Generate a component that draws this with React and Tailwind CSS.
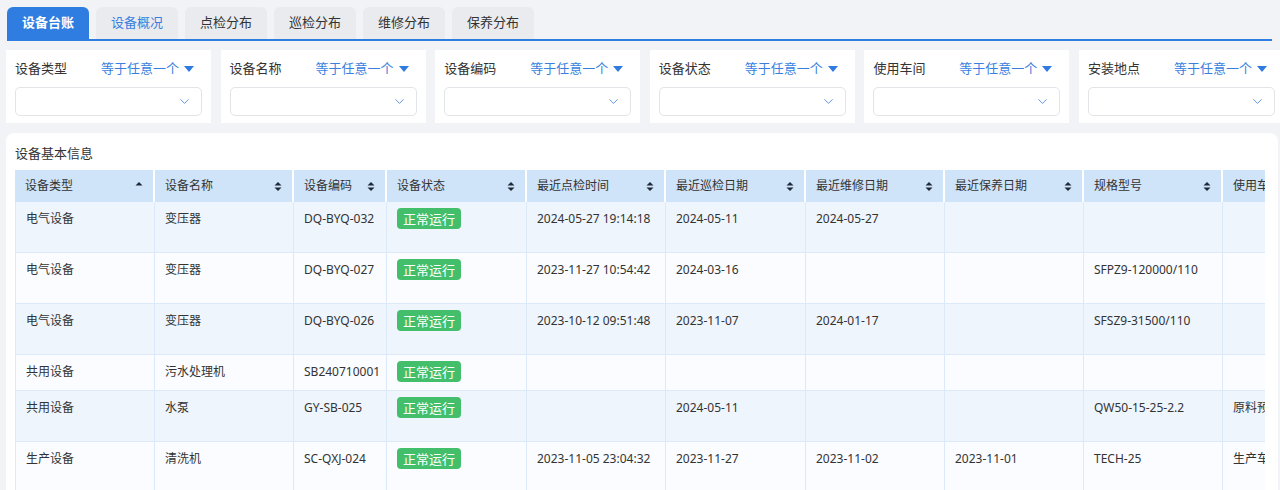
import React from "react";
import { ChevronDown } from "lucide-react";

const tabs = ["设备台账", "设备概况", "点检分布", "巡检分布", "维修分布", "保养分布"];
const filters = ["设备类型", "设备名称", "设备编码", "设备状态", "使用车间", "安装地点"];

const columns = [
  { title: "设备类型", w: "w-[140px]", sort: "asc" },
  { title: "设备名称", w: "w-[139px]" },
  { title: "设备编码", w: "w-[93px]" },
  { title: "设备状态", w: "w-[140px]" },
  { title: "最近点检时间", w: "w-[139px]" },
  { title: "最近巡检日期", w: "w-[140px]" },
  { title: "最近维修日期", w: "w-[139px]" },
  { title: "最近保养日期", w: "w-[139px]" },
  { title: "规格型号", w: "w-[139px]" },
  { title: "使用车间", w: "w-[140px]" },
];

const rows = [
  ["电气设备", "变压器", "DQ-BYQ-032", "2024-05-27 19:14:18", "2024-05-11", "2024-05-27", "", "", ""],
  ["电气设备", "变压器", "DQ-BYQ-027", "2023-11-27 10:54:42", "2024-03-16", "", "", "SFPZ9-120000/110", ""],
  ["电气设备", "变压器", "DQ-BYQ-026", "2023-10-12 09:51:48", "2023-11-07", "2024-01-17", "", "SFSZ9-31500/110", ""],
  ["共用设备", "污水处理机", "SB240710001", "", "", "", "", "", "", true],
  ["共用设备", "水泵", "GY-SB-025", "", "2024-05-11", "", "", "QW50-15-25-2.2", "原料预处理车间"],
  ["生产设备", "清洗机", "SC-QXJ-024", "2023-11-05 23:04:32", "2023-11-27", "2023-11-02", "2023-11-01", "TECH-25", "生产车间"],
];

function SortIcon({ type }) {
  return (
    <svg width="8" height="11" viewBox="0 0 8 11" className="shrink-0">
      <path d="M4 1 L7.5 4.5 H0.5 Z" fill="#1f2937" />
      {type !== "asc" && <path d="M4 10 L7.5 6.5 H0.5 Z" fill="#1f2937" />}
    </svg>
  );
}

function Filter({ label }) {
  return (
    <div className="w-[205px] shrink-0 bg-white px-[9px] pt-[9px] pb-[7px]">
      <div className="flex items-center justify-between h-[20px] pr-[8px]">
        <span className="text-[13px] text-[#333]">{label}</span>
        <span className="flex items-center gap-[5px] text-[13px] text-[#3a7fe0]">
          等于任意一个
          <svg width="10" height="6" viewBox="0 0 10 6">
            <path d="M0 0 H10 L5 6 Z" fill="#2f7be0" />
          </svg>
        </span>
      </div>
      <div className="mt-[8px] h-[29px] rounded-[5px] border border-[#e2e4e8] flex items-center justify-end pr-[9px]">
        <ChevronDown size={15} strokeWidth={1.4} color="#4a86dc" />
      </div>
    </div>
  );
}

export default function App() {
  return (
    <div
      className="w-[1280px] h-[490px] overflow-hidden bg-[#f2f3f7]"
      style={{ fontFamily: '"Noto Sans", "Noto Sans CJK SC", sans-serif' }}
    >
      <div className="pt-[7px] ml-[7px] mr-[8px] flex gap-[7px] border-b-2 border-[#2f7de1]">
        {tabs.map((t, i) => (
          <div
            key={t}
            className={
              "w-[82px] h-[32px] rounded-t-[6px] flex items-center justify-center text-[13px] " +
              (i === 0
                ? "bg-[#2f7de1] text-white font-bold"
                : i === 1
                ? "bg-[#e9ebef] text-[#3a7fe0]"
                : "bg-[#e9ebef] text-[#333]")
            }
          >
            {t}
          </div>
        ))}
      </div>

      <div className="flex gap-[9.6px] pl-[6px] mt-[9px]">
        {filters.map((f) => (
          <Filter key={f} label={f} />
        ))}
      </div>

      <div className="ml-[6px] mr-[2px] mt-[10px] bg-white rounded-[8px] pl-[9px] pt-[10px] h-[400px]">
        <div className="text-[13px] text-[#333] h-[20px] leading-[20px]">设备基本信息</div>
        <div className="w-[1250px] overflow-hidden mt-[7px] text-[12px] text-[#333]">
          <div className="flex w-max h-[32px] bg-[#cfe3f9]">
            {columns.map((c) => (
              <div key={c.title} className={c.w + " shrink-0 flex items-center justify-between px-[10px] border-r-2 border-white"}>
                <span className="whitespace-nowrap">{c.title}</span>
                <SortIcon type={c.sort} />
              </div>
            ))}
          </div>
          {rows.map((r, i) => {
            const short = r[9] === true;
            const cells = [r[0], r[1], r[2], "badge", r[3], r[4], r[5], r[6], r[7], r[8]];
            return (
              <div
                key={i}
                className={
                  "flex w-max border-b border-[#dce9f8] " +
                  (short ? "h-[36px] " : "h-[51px] ") +
                  (i % 2 === 0 ? "bg-[#eef5fd]" : "bg-[#fafcff]")
                }
              >
                {cells.map((c, j) => (
                  <div
                    key={j}
                    className={
                      columns[j].w +
                      " shrink-0 border-r border-[#dce9f8] px-[10px] pt-[7px] leading-[20px] whitespace-nowrap overflow-hidden" +
                      (j === 0 ? " border-l" : "")
                    }
                  >
                    {c === "badge" ? (
                      <span className="inline-flex items-center h-[21px] px-[6px] mt-[-1px] rounded-[4px] bg-[#43bf6b] text-white text-[13px] align-top">
                        正常运行
                      </span>
                    ) : (
                      c
                    )}
                  </div>
                ))}
              </div>
            );
          })}
        </div>
      </div>
    </div>
  );
}
